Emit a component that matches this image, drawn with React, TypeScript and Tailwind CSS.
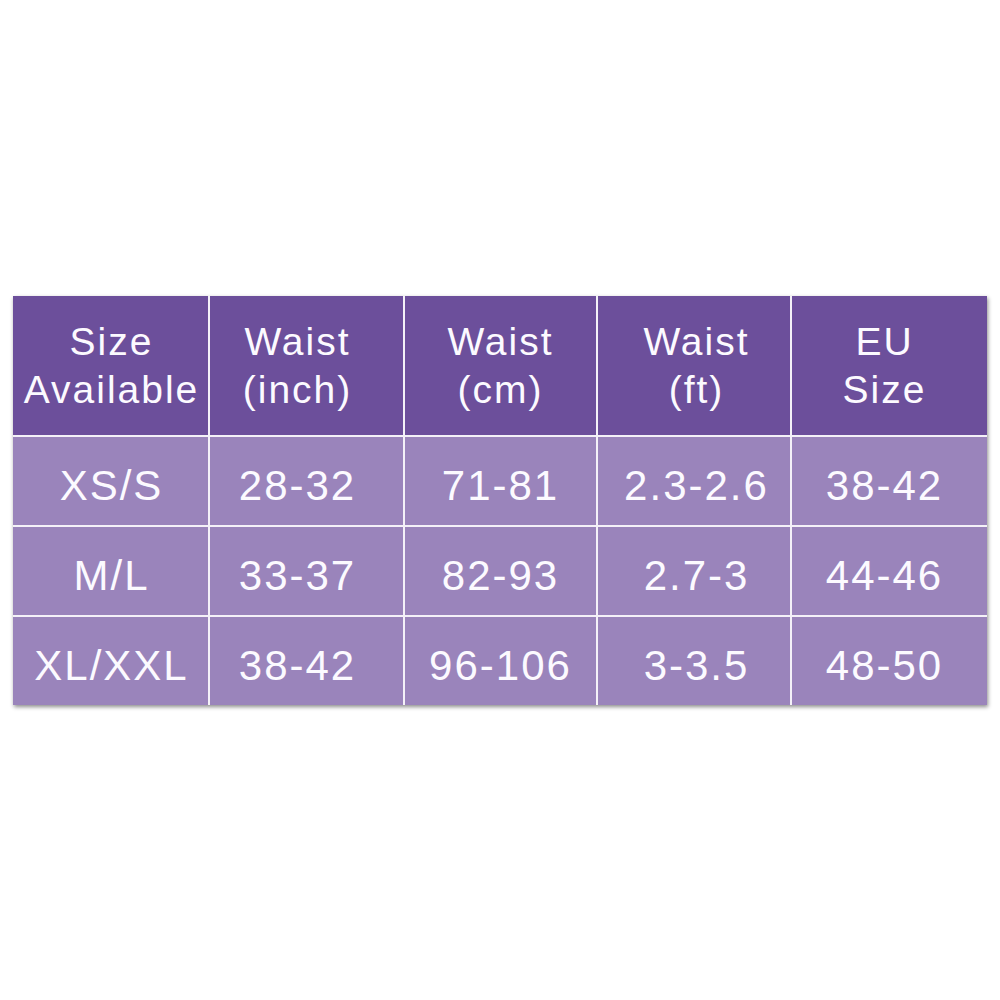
const headers = [
  ["Size", "Available"],
  ["Waist", "(inch)"],
  ["Waist", "(cm)"],
  ["Waist", "(ft)"],
  ["EU", "Size"],
];

const rows = [
  ["XS/S", "28-32", "71-81", "2.3-2.6", "38-42"],
  ["M/L", "33-37", "82-93", "2.7-3", "44-46"],
  ["XL/XXL", "38-42", "96-106", "3-3.5", "48-50"],
];

// text in the source isn't perfectly centred in every column
const colPad = ["pl-[2px]", "pr-[18px]", "", "pl-[5px]", "pr-[10px]"];

export default function App() {
  return (
    <div className="w-[1000px] h-[1000px] bg-white flex items-center justify-center font-['Liberation_Sans',Arial,sans-serif]">
      <div className="mt-[1px] w-[974px] grid grid-cols-[195px_193px_191px_192px_195px] grid-rows-[139px_88px_88px_88px] gap-[2px] bg-[#f4f1f8] shadow-[1px_2px_4px_rgba(0,0,0,0.45)]">
        {headers.map(([a, b], i) => (
          <div
            key={a + b}
            className={`bg-[#6c4f9b] text-[#fcfaff] text-[39px] leading-[48px] tracking-[2px] flex flex-col items-center justify-center ${colPad[i]}`}
          >
            <span>{a}</span>
            <span>{b}</span>
          </div>
        ))}
        {rows.map((row) =>
          row.map((cell, i) => (
            <div
              key={row[0] + i}
              className={`bg-[#9a84bb] text-[#fcfaff] text-[42px] tracking-[2px] flex items-center justify-center pt-[8px] ${colPad[i]}`}
            >
              {cell}
            </div>
          ))
        )}
      </div>
    </div>
  );
}
